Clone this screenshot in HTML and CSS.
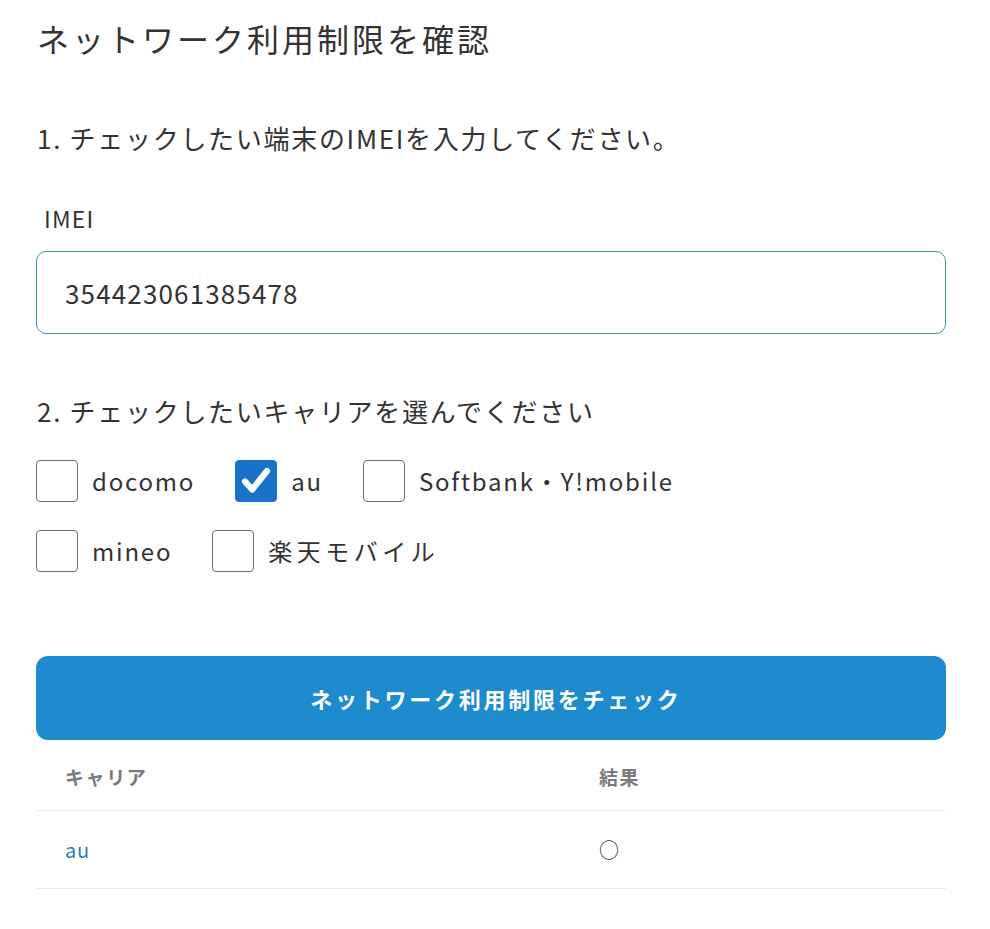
FILE: index.html
```html
<!DOCTYPE html>
<html lang="ja">
<head>
<meta charset="utf-8">
<title>ネットワーク利用制限を確認</title>
<link rel="stylesheet" href="styles.css">
</head>
<body>
<main class="page">
  <h1 class="title">ネットワーク利用制限を確認</h1>

  <p class="step step-1">1. チェックしたい端末のIMEIを入力してください。</p>

  <label class="field-label" for="imei">IMEI</label>
  <input class="imei-input" id="imei" type="text" value="354423061385478">

  <p class="step step-2">2. チェックしたいキャリアを選んでください</p>

  <div class="carriers">
    <div class="carrier-row">
      <label class="carrier"><span class="box"></span><span class="carrier-name">docomo</span></label>
      <label class="carrier"><span class="box checked"><svg viewBox="0 0 42 42" width="42" height="42"><path d="M9.5 21.5 L17 30 L32.5 10.5" fill="none" stroke="#fff" stroke-width="6.5" stroke-linecap="round" stroke-linejoin="round"/></svg></span><span class="carrier-name">au</span></label>
      <label class="carrier"><span class="box"></span><span class="carrier-name">Softbank・Y!mobile</span></label>
    </div>
    <div class="carrier-row">
      <label class="carrier"><span class="box"></span><span class="carrier-name">mineo</span></label>
      <label class="carrier"><span class="box"></span><span class="carrier-name carrier-name-jp">楽天モバイル</span></label>
    </div>
  </div>

  <button class="check-button" type="button">ネットワーク利用制限をチェック</button>

  <table class="result-table">
    <thead>
      <tr><th class="col-carrier">キャリア</th><th class="col-result">結果</th></tr>
    </thead>
    <tbody>
      <tr><td class="carrier-cell">au</td><td class="result-cell">○</td></tr>
    </tbody>
  </table>
</main>
</body>
</html>
```

FILE: styles.css
```css
* { box-sizing: border-box; }

html, body {
  margin: 0;
  padding: 0;
  background: #fff;
}

body {
  font-family: "Noto Sans CJK JP", "Noto Sans", sans-serif;
  color: #333;
}

.page {
  width: 910px;
  margin-left: 36px;
  padding-top: 14px;
  display: flex;
  flex-direction: column;
}

.title {
  margin: 0;
  font-size: 32px;
  font-weight: 400;
  line-height: 48px;
  letter-spacing: 3px;
  padding-left: 1px;
}

.step {
  margin: 0;
  font-size: 26px;
  line-height: 40px;
  letter-spacing: 1.7px;
  padding-left: 1px;
}

.step-1 { margin-top: 56px; }

.field-label {
  margin-top: 44px;
  padding-left: 8px;
  font-size: 23px;
  line-height: 32px;
  letter-spacing: 1.2px;
}

.imei-input {
  margin-top: 17px;
  width: 910px;
  height: 83px;
  border: 1px solid #3d8fbf;
  border-radius: 10px;
  padding: 0 0 0 28px;
  font-family: inherit;
  font-size: 26px;
  letter-spacing: 1.15px;
  color: #333;
  outline: none;
}

.step-2 { margin-top: 57px; }

.carriers {
  margin-top: 29px;
  display: flex;
  flex-direction: column;
  gap: 28px;
}

.carrier-row {
  display: flex;
}

.carrier {
  display: flex;
  align-items: center;
  height: 42px;
  margin-right: 40px;
}

.box {
  width: 42px;
  height: 42px;
  border: 1.5px solid #6b6b6b;
  border-radius: 4px;
  display: flex;
  align-items: center;
  justify-content: center;
  flex: none;
}

.box.checked {
  background: #1872c8;
  border-color: #1872c8;
}

.box svg { display: block; }

.carrier-name {
  margin-left: 14px;
  font-size: 24px;
  letter-spacing: 1.8px;
  line-height: 42px;
}

.carrier-name-jp {
  letter-spacing: 4.5px;
}

.check-button {
  margin-top: 84px;
  width: 910px;
  height: 84px;
  border: none;
  border-radius: 12px;
  background: #1e8bcf;
  color: #fff;
  font-family: inherit;
  font-size: 22px;
  font-weight: 700;
  letter-spacing: 2.75px;
  padding-left: 16px;
  cursor: pointer;
}

.result-table {
  width: 910px;
  border-collapse: collapse;
}

.result-table th,
.result-table td {
  text-align: left;
  padding: 0 0 0 29px;
  border-bottom: 1px solid #ececec;
}

.result-table th {
  height: 70px;
  font-size: 19px;
  font-weight: 700;
  color: #7a7a7a;
  letter-spacing: 1.6px;
  padding-top: 4px;
}

.col-carrier { width: 534px; }

.result-table td {
  height: 78px;
  font-size: 20px;
}

.carrier-cell {
  color: #2a80b9;
  letter-spacing: 0.8px;
}

.result-cell {
  font-size: 24px;
  color: #333;
}
```
